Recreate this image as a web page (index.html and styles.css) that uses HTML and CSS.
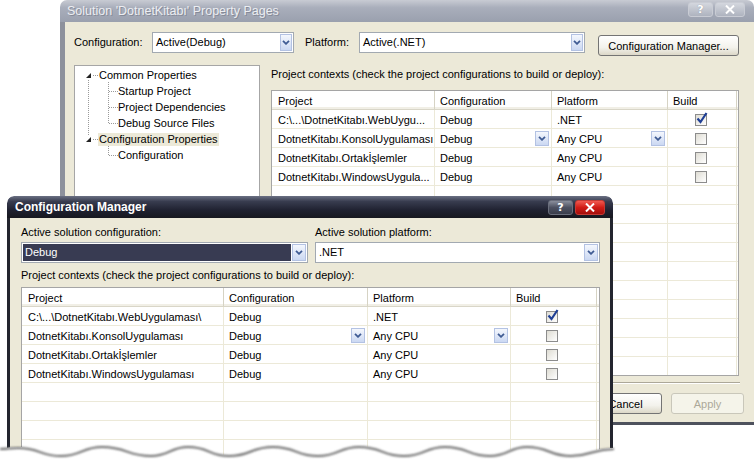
FILE: index.html
```html
<!DOCTYPE html>
<html>
<head>
<meta charset="utf-8">
<link rel="stylesheet" href="styles.css">
</head>
<body>
<div class="win back">
  <div class="titlebar">
    <span class="title">Solution 'DotnetKitabı' Property Pages</span>
    <div class="tbtns">
      <span class="tbtn help">?</span>
      <span class="tbtn close"><svg width="10" height="9" viewBox="0 0 10 9"><path d="M1 0.5L9 8.5M9 0.5L1 8.5" stroke="#fff" stroke-width="2"/></svg></span>
    </div>
  </div>
  <div class="wbody">
    <div class="cfgrow">
      <span class="lbl lbl-cfg">Configuration:</span>
      <div class="combo combo-cfg"><span class="ctext">Active(Debug)</span><span class="darrow"><svg width="8" height="5" viewBox="0 0 8 5"><path d="M1 0.8L4 3.8L7 0.8" stroke="#3f5b93" stroke-width="1.8" fill="none"/></svg></span></div>
      <span class="lbl lbl-plat">Platform:</span>
      <div class="combo combo-plat"><span class="ctext">Active(.NET)</span><span class="darrow"><svg width="8" height="5" viewBox="0 0 8 5"><path d="M1 0.8L4 3.8L7 0.8" stroke="#3f5b93" stroke-width="1.8" fill="none"/></svg></span></div>
      <button class="btn cmbtn">Configuration Manager...</button>
    </div>
    <div class="main">
      <div class="tree">
        <svg class="treelines" width="186" height="120" viewBox="0 0 186 120">
          <path d="M16 7L16 12L11 12Z" fill="#222"/>
          <path d="M16 71L16 76L11 76Z" fill="#222"/>
          <g stroke="#9a9a9a" stroke-width="1" stroke-dasharray="1 1" shape-rendering="crispEdges">
            <path d="M18 9.5H24"/>
            <path d="M18 73.5H24"/>
            <path d="M13.5 14V70"/>
            <path d="M33.5 16V57"/>
            <path d="M34 25.5H43M34 41.5H43M34 57.5H43"/>
            <path d="M33.5 80V89"/>
            <path d="M34 89.5H43"/>
          </g>
        </svg>
        <div class="node l0">Common Properties</div>
        <div class="node l1">Startup Project</div>
        <div class="node l1">Project Dependencies</div>
        <div class="node l1">Debug Source Files</div>
        <div class="node l0"><span class="sel">Configuration Properties</span></div>
        <div class="node l1">Configuration</div>
      </div>
      <div class="right">
        <div class="ctxlabel">Project contexts (check the project configurations to build or deploy):</div>
        <div class="grid bgrid">
          <div class="cell h first">Project</div><div class="cell h">Configuration</div><div class="cell h">Platform</div><div class="cell h">Build</div><div class="cell h end"></div>

          <div class="cell first">C:\...\DotnetKitabı.WebUygu...</div><div class="cell">Debug</div><div class="cell">.NET</div><div class="cell ck"><span class="chk on"><svg width="14" height="14" viewBox="0 0 14 14"><path d="M2.5 6.5L5.5 10L11.5 1" stroke="#1f3f95" stroke-width="2.2" fill="none"/></svg></span></div><div class="cell end"></div>

          <div class="cell first">DotnetKitabı.KonsolUygulaması</div><div class="cell">Debug<span class="darrow t"><svg width="8" height="5" viewBox="0 0 8 5"><path d="M1 0.8L4 3.8L7 0.8" stroke="#3f5b93" stroke-width="1.8" fill="none"/></svg></span></div><div class="cell">Any CPU<span class="darrow t"><svg width="8" height="5" viewBox="0 0 8 5"><path d="M1 0.8L4 3.8L7 0.8" stroke="#3f5b93" stroke-width="1.8" fill="none"/></svg></span></div><div class="cell ck"><span class="chk"></span></div><div class="cell end"></div>

          <div class="cell first">DotnetKitabı.Ortakİşlemler</div><div class="cell">Debug</div><div class="cell">Any CPU</div><div class="cell ck"><span class="chk"></span></div><div class="cell end"></div>

          <div class="cell first">DotnetKitabı.WindowsUygula...</div><div class="cell">Debug</div><div class="cell">Any CPU</div><div class="cell ck"><span class="chk"></span></div><div class="cell end"></div>

          <div class="cell first"></div><div class="cell"></div><div class="cell"></div><div class="cell"></div><div class="cell end"></div>
          <div class="cell first"></div><div class="cell"></div><div class="cell"></div><div class="cell"></div><div class="cell end"></div>
          <div class="cell first"></div><div class="cell"></div><div class="cell"></div><div class="cell"></div><div class="cell end"></div>
          <div class="cell first"></div><div class="cell"></div><div class="cell"></div><div class="cell"></div><div class="cell end"></div>
          <div class="cell first"></div><div class="cell"></div><div class="cell"></div><div class="cell"></div><div class="cell end"></div>
          <div class="cell first"></div><div class="cell"></div><div class="cell"></div><div class="cell"></div><div class="cell end"></div>
          <div class="cell first"></div><div class="cell"></div><div class="cell"></div><div class="cell"></div><div class="cell end"></div>
          <div class="cell first"></div><div class="cell"></div><div class="cell"></div><div class="cell"></div><div class="cell end"></div>
          <div class="cell first"></div><div class="cell"></div><div class="cell"></div><div class="cell"></div><div class="cell end"></div>
          <div class="cell first"></div><div class="cell"></div><div class="cell"></div><div class="cell"></div><div class="cell end"></div>
        </div>
      </div>
    </div>
    <div class="sep"></div>
    <div class="btnrow">
      <button class="btn dlg">OK</button>
      <button class="btn dlg">Cancel</button>
      <button class="btn dlg dis">Apply</button>
    </div>
  </div>
</div>

<div class="win front">
  <div class="titlebar">
    <span class="title">Configuration Manager</span>
    <div class="tbtns">
      <span class="tbtn help">?</span>
      <span class="tbtn close"><svg width="10" height="9" viewBox="0 0 10 9"><path d="M1 0.5L9 8.5M9 0.5L1 8.5" stroke="#fff" stroke-width="2"/></svg></span>
    </div>
  </div>
  <div class="wbody">
    <div class="solrow">
      <div class="solcol">
        <span class="lbl">Active solution configuration:</span>
        <div class="combo fcombo"><span class="ctext selbg">Debug</span><span class="darrow"><svg width="8" height="5" viewBox="0 0 8 5"><path d="M1 0.8L4 3.8L7 0.8" stroke="#3f5b93" stroke-width="1.8" fill="none"/></svg></span></div>
      </div>
      <div class="solcol">
        <span class="lbl">Active solution platform:</span>
        <div class="combo fcombo"><span class="ctext">.NET</span><span class="darrow"><svg width="8" height="5" viewBox="0 0 8 5"><path d="M1 0.8L4 3.8L7 0.8" stroke="#3f5b93" stroke-width="1.8" fill="none"/></svg></span></div>
      </div>
    </div>
    <div class="ctxlabel f">Project contexts (check the project configurations to build or deploy):</div>
    <div class="grid fgrid">
      <div class="cell h first">Project</div><div class="cell h">Configuration</div><div class="cell h">Platform</div><div class="cell h">Build</div><div class="cell h end"></div>

      <div class="cell first">C:\...\DotnetKitabı.WebUygulaması\</div><div class="cell">Debug</div><div class="cell">.NET</div><div class="cell ck"><span class="chk on"><svg width="14" height="14" viewBox="0 0 14 14"><path d="M2.5 6.5L5.5 10L11.5 1" stroke="#1f3f95" stroke-width="2.2" fill="none"/></svg></span></div><div class="cell end"></div>

      <div class="cell first">DotnetKitabı.KonsolUygulaması</div><div class="cell">Debug<span class="darrow t"><svg width="8" height="5" viewBox="0 0 8 5"><path d="M1 0.8L4 3.8L7 0.8" stroke="#3f5b93" stroke-width="1.8" fill="none"/></svg></span></div><div class="cell">Any CPU<span class="darrow t"><svg width="8" height="5" viewBox="0 0 8 5"><path d="M1 0.8L4 3.8L7 0.8" stroke="#3f5b93" stroke-width="1.8" fill="none"/></svg></span></div><div class="cell ck"><span class="chk"></span></div><div class="cell end"></div>

      <div class="cell first">DotnetKitabı.Ortakİşlemler</div><div class="cell">Debug</div><div class="cell">Any CPU</div><div class="cell ck"><span class="chk"></span></div><div class="cell end"></div>

      <div class="cell first">DotnetKitabı.WindowsUygulaması</div><div class="cell">Debug</div><div class="cell">Any CPU</div><div class="cell ck"><span class="chk"></span></div><div class="cell end"></div>

      <div class="cell first"></div><div class="cell"></div><div class="cell"></div><div class="cell"></div><div class="cell end"></div>
      <div class="cell first"></div><div class="cell"></div><div class="cell"></div><div class="cell"></div><div class="cell end"></div>
      <div class="cell first"></div><div class="cell"></div><div class="cell"></div><div class="cell"></div><div class="cell end"></div>
      <div class="cell first"></div><div class="cell"></div><div class="cell"></div><div class="cell"></div><div class="cell end"></div>
    </div>
  </div>
</div>

<svg class="torn" width="640" height="25" viewBox="0 436 640 25">
  <defs>
    <filter id="blur" x="-5%" y="-100%" width="110%" height="300%"><feGaussianBlur stdDeviation="1.2"/></filter>
  </defs>
  <path d="M0 448 C9 448 9 447 18 447 C40 447 40 455 61 455 C82 455 82 446 102 446 C127 446 127 455 151 455 C170 455 170 446 188 446 C209 446 209 455 229 455 C251 455 251 446 273 446 C296 446 296 455 318 455 C339 455 339 446 359 446 C382 446 382 455 404 455 C425 455 425 446 445 446 C468 446 468 455 490 455 C509 455 509 446 527 446 C549 446 549 455 571 455 C592 455 592 448 614 448 L640 448 L640 461 L0 461 Z" fill="#fff"/>
  <path d="M0 448 C9 448 9 447 18 447 C40 447 40 455 61 455 C82 455 82 446 102 446 C127 446 127 455 151 455 C170 455 170 446 188 446 C209 446 209 455 229 455 C251 455 251 446 273 446 C296 446 296 455 318 455 C339 455 339 446 359 446 C382 446 382 455 404 455 C425 455 425 446 445 446 C468 446 468 455 490 455 C509 455 509 446 527 446 C549 446 549 455 571 455 C592 455 592 448 614 448" fill="none" stroke="#6a6a6a" stroke-width="2" filter="url(#blur)" transform="translate(0 1)"/>
</svg>
</body>
</html>
```

FILE: styles.css
```css
* { box-sizing: border-box; }
html, body { margin: 0; padding: 0; }
body {
  width: 754px;
  height: 461px;
  overflow: hidden;
  position: relative;
  background: #fff;
  font-family: "Liberation Sans", Arial, sans-serif;
  font-size: 11px;
  color: #000;
}

.win {
  position: absolute;
  display: flex;
  flex-direction: column;
  overflow: hidden;
}
.back { left: 60px; top: 0; width: 694px; height: 425px; }
.front { left: 7px; top: 196px; width: 606px; height: 265px; border-radius: 7px 7px 0 0; }

.titlebar {
  flex: none;
  height: 22px;
  display: flex;
  align-items: flex-start;
  border-radius: 7px 7px 0 0;
  padding-left: 7px;
}
.back .titlebar { background: linear-gradient(#c8cbd3, #a9aebb 35%, #9aa0ae); }
.front .titlebar { background: linear-gradient(#6b7083, #383c4f 25%, #1f2130 65%, #17181f); }

.title {
  flex: 1;
  font-family: "Liberation Sans", Arial, sans-serif;
  line-height: 22px;
  white-space: nowrap;
}
.back .title { color: #eceef2; text-shadow: 1px 1px 0 #858a98; font-size: 12.5px; }
.front .title { color: #fff; font-weight: bold; font-size: 12px; padding-left: 1px; }

.tbtns { display: flex; gap: 2px; }
.back .tbtns { margin: 2px 9px 0 0; }
.front .tbtns { margin: 4px 8px 0 0; }
.tbtn {
  height: 15px;
  display: flex;
  align-items: center;
  justify-content: center;
  border-radius: 3px;
  color: #fff;
  font-family: "DejaVu Sans", sans-serif;
  font-weight: bold;
  font-size: 11px;
}
.tbtn.help { width: 25px; }
.tbtn.close { width: 30px; }
.back .tbtn { background: linear-gradient(#d4d7de, #aeb3bf); border: 1px solid #c9ccd4; text-shadow: 0 0 1px #7d8290; }
.front .tbtn.help { background: linear-gradient(#8a8e9b, #4d5161 50%, #3a3d4b); border: 1px solid #6a6e7c; }
.front .tbtn.close { background: linear-gradient(#f05a50, #d01c16 50%, #a40e0c); border: 1px solid #c43a34; }

.wbody {
  flex: 1;
  min-height: 0;
  overflow: hidden;
  background: #ece9d8;
  display: flex;
  flex-direction: column;
}
.back .wbody {
  border-left: 5px solid #8d919c;
  border-bottom: 3px solid #4e525d;
  padding: 10px 0 0 9px;
}
.front .wbody {
  border-left: 3px solid #23252f;
  border-right: 3px solid #23252f;
  padding: 8px 0 0 11px;
}

.lbl { line-height: 13px; white-space: nowrap; }

.cfgrow { display: flex; align-items: flex-start; height: 21px; flex: none; }
.cfgrow .lbl { line-height: 21px; }
.lbl-cfg { width: 78px; }
.lbl-plat { width: 54px; margin-left: 11px; }

.combo {
  height: 21px;
  border: 1px solid #a2a9b1;
  background: #fff;
  display: flex;
  align-items: center;
  padding: 1px;
}
.combo-cfg { width: 142px; }
.combo-plat { width: 226px; }
.ctext { flex: 1; padding-left: 2px; line-height: 17px; white-space: nowrap; }

.darrow {
  flex: none;
  width: 12px;
  height: 17px;
  display: flex;
  align-items: center;
  justify-content: center;
  background: linear-gradient(#f4f7fd, #cbd8f2);
  border: 1px solid #b3c2e3;
}
.fcombo .darrow { width: 14px; }
.darrow.t { width: 14px; height: 15px; margin-left: auto; margin-right: 2px; }

.btn {
  font-family: inherit;
  font-size: 11px;
  color: #000;
  border: 1px solid #747474;
  border-radius: 3px;
  background: linear-gradient(#ffffff, #f3f2ec 60%, #dcd8c8);
  padding: 0;
  flex: none;
}
.cmbtn { width: 141px; height: 21px; margin-left: 13px; margin-top: 3px; }

.main { display: flex; margin-top: 12px; flex: none; }
.tree {
  position: relative;
  width: 186px;
  height: 311px;
  border: 1px solid #a6a6a6;
  background: #fff;
  padding-top: 1px;
}
.treelines { position: absolute; left: 0; top: 0; }
.node { height: 16px; line-height: 16px; white-space: nowrap; }
.node.l0 { padding-left: 24px; }
.node.l1 { padding-left: 43px; }
.sel {
  display: inline-block;
  background: #ece9d8;
  line-height: 13px;
  padding: 0 1px;
  margin-left: -1px;
}

.right { margin-left: 11px; }
.ctxlabel { line-height: 13px; margin-top: 3px; white-space: nowrap; flex: none; }
.ctxlabel.f { margin-top: 6px; }

.grid {
  display: grid;
  border: 1px solid #a5a5a5;
  background: #fff;
  overflow: hidden;
  grid-auto-rows: 19px;
  flex: none;
}
.bgrid {
  margin-top: 9px;
  width: 468px;
  height: 286px;
  grid-template-columns: 163px 117px 116px 69px 1fr;
}
.fgrid {
  margin-top: 5px;
  width: 579px;
  height: 200px;
  grid-template-columns: 202px 144px 143px 86px 1fr;
}
.cell {
  display: flex;
  align-items: center;
  padding-left: 5px;
  border-right: 1px solid #ece9d8;
  border-bottom: 1px solid #ece9d8;
  white-space: nowrap;
  overflow: hidden;
  padding-top: 1px;
}
.cell.first { padding-left: 6px; }
.cell.end { border-right: none; padding: 0; }
.cell.h {
  border-right: 1px solid #d6d3c4;
  border-bottom: 1px solid #d9d6c8;
  box-shadow: inset 0 -2px 0 #f1efe6;
}
.cell.h.end { border-right: none; }
.cell.ck { justify-content: center; padding-left: 0; }

.chk {
  position: relative;
  width: 12px;
  height: 12px;
  border: 1px solid #8c8c8c;
  background: linear-gradient(135deg, #dedcd3, #ffffff);
  margin-left: -3px;
}
.chk svg { position: absolute; left: -1px; top: -3px; }

.sep {
  width: 666px;
  height: 2px;
  margin-top: 6px;
  border-top: 1px solid #aca899;
  border-bottom: 1px solid #fff;
  flex: none;
}
.btnrow {
  display: flex;
  justify-content: flex-end;
  gap: 9px;
  width: 670px;
  margin-top: 9px;
  flex: none;
}
.btn.dlg { width: 73px; height: 21px; }
.btn.dis { color: #aca899; border-color: #c9c7ba; background: #f5f4ea; }

.solrow { display: grid; grid-template-columns: 287px 285px; column-gap: 7px; flex: none; }
.solcol { display: flex; flex-direction: column; gap: 3px; }
.fcombo { padding: 1px; }
.selbg { background: #383b52; color: #fff; margin-right: 1px; }

.torn { position: absolute; left: 0; top: 436px; }
```
